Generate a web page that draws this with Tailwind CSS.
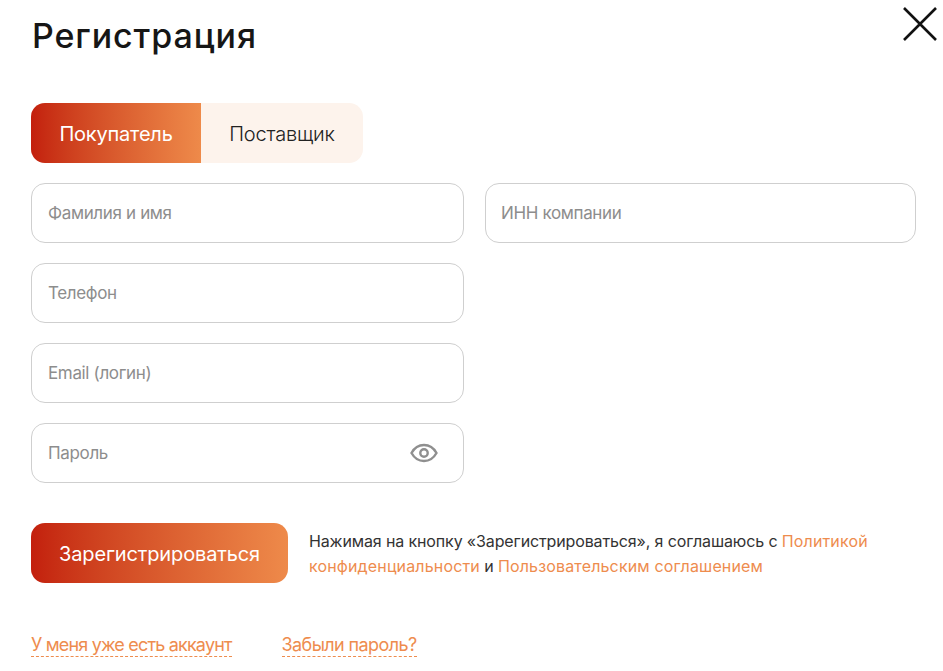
<!DOCTYPE html>
<html lang="ru">
<head>
   <meta charset="UTF-8">
   <title>Регистрация</title>
   <script src="https://cdn.jsdelivr.net/npm/@tailwindcss/browser@4"></script>
</head>
<body class="bg-white">
   <div class="relative w-[943px] h-[671px] overflow-hidden pl-[31px] pt-[14px] font-['Inter',sans-serif]">
      <button class="absolute left-[902px] top-[6px] w-[36px] h-[36px]">
         <svg class="w-[36px] h-[36px]" viewBox="0 0 36 36" fill="none" stroke="#111111" stroke-width="2.6"><path d="M2 2L34 34M34 2L2 34"/></svg>
      </button>

      <h1 class="h-[44px] pl-[1px] text-[34px] leading-[44px] font-medium tracking-[0.9px] text-[#161616]">Регистрация</h1>

      <div class="mt-[45px] flex w-[332px] h-[60px] rounded-[14px] bg-[#fdf3ec] text-[20px] tracking-[-0.2px] overflow-hidden">
         <button class="w-[170px] pt-[2px] bg-gradient-to-r from-[#c31f0d] to-[#ee8a4a] text-white">Покупатель</button>
         <button class="w-[162px] pt-[2px] font-light text-[#222222]">Поставщик</button>
      </div>

      <div class="mt-[20px] flex gap-[21px] items-start">
         <div class="flex flex-col gap-[20px] w-[433px]">
            <div class="h-[60px] flex items-center px-[16px] pt-[2px] border border-[#cfcfcf] rounded-[14px] text-[17px] tracking-[-0.35px] text-[#8d8d8d]">Фамилия и имя</div>
            <div class="h-[60px] flex items-center px-[16px] pt-[2px] border border-[#cfcfcf] rounded-[14px] text-[17px] tracking-[-0.35px] text-[#8d8d8d]">Телефон</div>
            <div class="h-[60px] flex items-center px-[16px] pt-[2px] border border-[#cfcfcf] rounded-[14px] text-[17px] tracking-[-0.35px] text-[#8d8d8d]">Email (логин)</div>
            <div class="h-[60px] flex items-center justify-between pl-[16px] pr-[25px] border border-[#cfcfcf] rounded-[14px] text-[17px] tracking-[-0.35px] text-[#8d8d8d]">
               <span class="pt-[2px]">Пароль</span>
               <svg class="w-[28px] h-[20px]" viewBox="0 0 28 20" fill="none" stroke="#8f8f8f" stroke-width="2.4"><path d="M1.5 10C4.5 4.6 9 2 14 2s9.500 2.600 12.500 8C23.500 15.400 19 18 14 18S4.500 15.400 1.500 10Z"/><circle cx="14" cy="10" r="3.700"/></svg>
            </div>
         </div>
         <div class="w-[431px] h-[60px] flex items-center px-[15px] pt-[2px] border border-[#cfcfcf] rounded-[14px] text-[17px] tracking-[-0.35px] text-[#8d8d8d]">ИНН компании</div>
      </div>

      <div class="mt-[40px] flex items-center gap-[21px]">
         <button class="w-[257px] h-[60px] pt-[2px] rounded-[14px] bg-gradient-to-r from-[#c31f0d] to-[#ee8a4a] text-white text-[20px] tracking-[-0.15px]">Зарегистрироваться</button>
         <p class="w-[590px] pt-[2px] text-[16px] leading-[25px] tracking-[-0.13px] text-[#333333]">Нажимая на кнопку «Зарегистрироваться», я соглашаюсь с <a href="#" class="tracking-[0.15px] text-[#ee8c4e]">Политикой конфиденциальности</a> и <a href="#" class="tracking-[0.15px] text-[#ee8c4e]">Пользовательским соглашением</a></p>
      </div>

      <div class="mt-[51px] flex gap-[50px] text-[18px] leading-[22px] text-[#ee8c4e]">
         <a href="#" class="border-b border-dashed border-[#ee8c4e] tracking-[-0.82px]">У меня уже есть аккаунт</a>
         <a href="#" class="border-b border-dashed border-[#ee8c4e] tracking-[-0.6px]">Забыли пароль?</a>
      </div>
   </div>
</body>
</html>
